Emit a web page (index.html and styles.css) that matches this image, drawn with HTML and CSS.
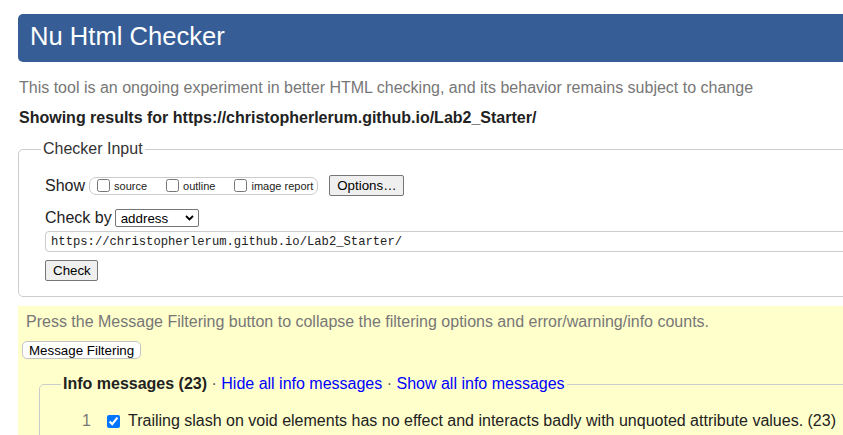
FILE: index.html
```html
<!DOCTYPE html>
<html lang="en">
<head>
<meta charset="utf-8">
<title>Nu Html Checker</title>
<link rel="stylesheet" href="styles.css">
</head>
<body>
<div class="page">
  <h1 class="masthead">Nu Html Checker</h1>
  <p class="intro">This tool is an ongoing experiment in better HTML checking, and its behavior remains subject to change</p>
  <p class="results-for">Showing results for https://christopherlerum.github.io/Lab2_Starter/</p>

  <fieldset class="checker">
    <legend class="checker-legend">Checker Input</legend>
    <div class="show-row">
      <span class="row-label">Show</span>
      <span class="opts">
        <label class="opt"><input type="checkbox" class="cb">source</label>
        <label class="opt"><input type="checkbox" class="cb">outline</label>
        <label class="opt"><input type="checkbox" class="cb">image report</label>
      </span>
      <button class="btn btn-options" type="button">Options…</button>
    </div>
    <div class="checkby-row">
      <span class="row-label">Check by</span>
      <span class="select-wrap">
        <select class="select"><option>address</option></select>
        <svg class="chevron" width="9" height="6" viewBox="0 0 9 6"><path d="M1 1 L4.5 4.5 L8 1" fill="none" stroke="#000" stroke-width="1.8"/></svg>
      </span>
    </div>
    <input class="url" type="text" value="https://christopherlerum.github.io/Lab2_Starter/">
    <button class="btn btn-check" type="button">Check</button>
  </fieldset>

  <section class="filters">
    <p class="filters-note">Press the Message Filtering button to collapse the filtering options and error/warning/info counts.</p>
    <button class="btn-filter" type="button">Message Filtering</button>
    <fieldset class="info">
      <legend class="info-legend"><b class="info-title">Info messages (23)</b> <span class="dot">·</span> <a class="link" href="#">Hide all info messages</a> <span class="dot">·</span> <a class="link" href="#">Show all info messages</a></legend>
      <div class="msg-row">
        <span class="num">1</span>
        <input type="checkbox" class="cb msg-cb" checked>
        <span class="msg-text">Trailing slash on void elements has no effect and interacts badly with unquoted attribute values. (23)</span>
      </div>
    </fieldset>
  </section>
</div>
</body>
</html>
```

FILE: styles.css
```css
html {
  overflow: hidden;
  background: #fff;
}

body {
  margin: 0;
  padding: 14px 0 0 18px;
  font-family: "Liberation Sans", Arial, sans-serif;
  font-size: 16px;
  color: #222;
}

.page {
  width: 880px;
}

.masthead {
  margin: 0;
  height: 48px;
  box-sizing: border-box;
  padding: 0 0 0 12px;
  line-height: 44px;
  font-size: 25.6px;
  font-weight: normal;
  color: #fff;
  background: #365d95;
  border-radius: 5px;
}

.intro {
  margin: 16px 0 0 1px;
  line-height: 20px;
  color: #777;
}

.results-for {
  margin: 10px 0 0 1px;
  line-height: 20px;
  font-weight: bold;
  color: #222;
}

.checker {
  margin: 11px 0 0 0;
  padding: 16px 0 15px 26px;
  border: 1px solid #ccc;
  border-radius: 5px;
  min-inline-size: 0;
}

.checker-legend {
  padding: 0 2px;
  margin-left: -4px;
  line-height: 20px;
  color: #333;
}

.show-row {
  display: flex;
  align-items: center;
  height: 21px;
}

.row-label {
  line-height: 20px;
  color: #222;
}

.opts {
  display: inline-flex;
  align-items: center;
  gap: 19px;
  height: 18px;
  box-sizing: border-box;
  margin-left: 4px;
  padding: 0 4px 0 7px;
  border: 1px solid #ccc;
  border-radius: 7px;
}

.opt {
  display: inline-flex;
  align-items: center;
  font-size: 11px;
  color: #222;
}

.cb {
  width: 13px;
  height: 13px;
  margin: 0 4px 0 0;
}

.btn {
  height: 21px;
  box-sizing: border-box;
  padding: 0 7px;
  font-family: "Liberation Sans", Arial, sans-serif;
  font-size: 13.333px;
  color: #000;
  background: #efefef;
  border: 1px solid #767676;
  border-radius: 2px;
}

.btn-options {
  margin-left: 11px;
  width: 75px;
}

.checkby-row {
  display: flex;
  align-items: center;
  height: 20px;
  margin-top: 12px;
}

.select-wrap {
  position: relative;
  display: inline-block;
  margin-left: 3px;
  height: 18px;
}

.select {
  appearance: none;
  -webkit-appearance: none;
  width: 84px;
  height: 18px;
  box-sizing: border-box;
  padding: 0 0 0 5px;
  font-family: "Liberation Sans", Arial, sans-serif;
  font-size: 13.333px;
  color: #000;
  background: #fff;
  border: 1px solid #767676;
  border-radius: 2px;
  display: block;
}

.chevron {
  position: absolute;
  right: 5px;
  top: 6px;
  pointer-events: none;
}

.url {
  display: block;
  width: 820px;
  height: 21px;
  box-sizing: border-box;
  margin: 3px 0 0 0;
  padding: 0 5px;
  font-family: "Liberation Mono", "DejaVu Sans Mono", monospace;
  font-size: 12.2px;
  color: #222;
  background: #fff;
  border: 1px solid #ccc;
  border-radius: 4px;
}

.btn-check {
  display: block;
  margin-top: 8px;
  width: 53px;
}

.filters {
  margin-top: 9px;
  padding: 6px 0 20px 4px;
  background: #ffffcc;
}

.filters-note {
  margin: 0 0 0 4px;
  line-height: 20px;
  color: #777;
}

.btn-filter {
  display: block;
  margin-top: 9px;
  height: 18px;
  box-sizing: border-box;
  padding: 0 6px;
  font-family: "Liberation Sans", Arial, sans-serif;
  font-size: 13.333px;
  color: #000;
  background: #fff;
  border: 1px solid #c4c4c4;
  border-radius: 5px;
}

.info {
  margin: 14px 0 0 17px;
  padding: 16px 0 20px 21px;
  border: 1px solid #ccc;
  border-radius: 5px;
  min-inline-size: 0;
}

.info-legend {
  padding: 0 2px;
  line-height: 22px;
}

.info-title {
  color: #222;
}

.dot {
  color: #555;
}

.link {
  color: #00f;
  text-decoration: none;
}

.msg-row {
  display: flex;
  align-items: center;
  line-height: 20px;
}

.num {
  width: 30px;
  text-align: right;
  color: #777;
}

.msg-cb {
  margin: 0 8px 0 16px;
}

.msg-text {
  color: #222;
  white-space: nowrap;
}
```
